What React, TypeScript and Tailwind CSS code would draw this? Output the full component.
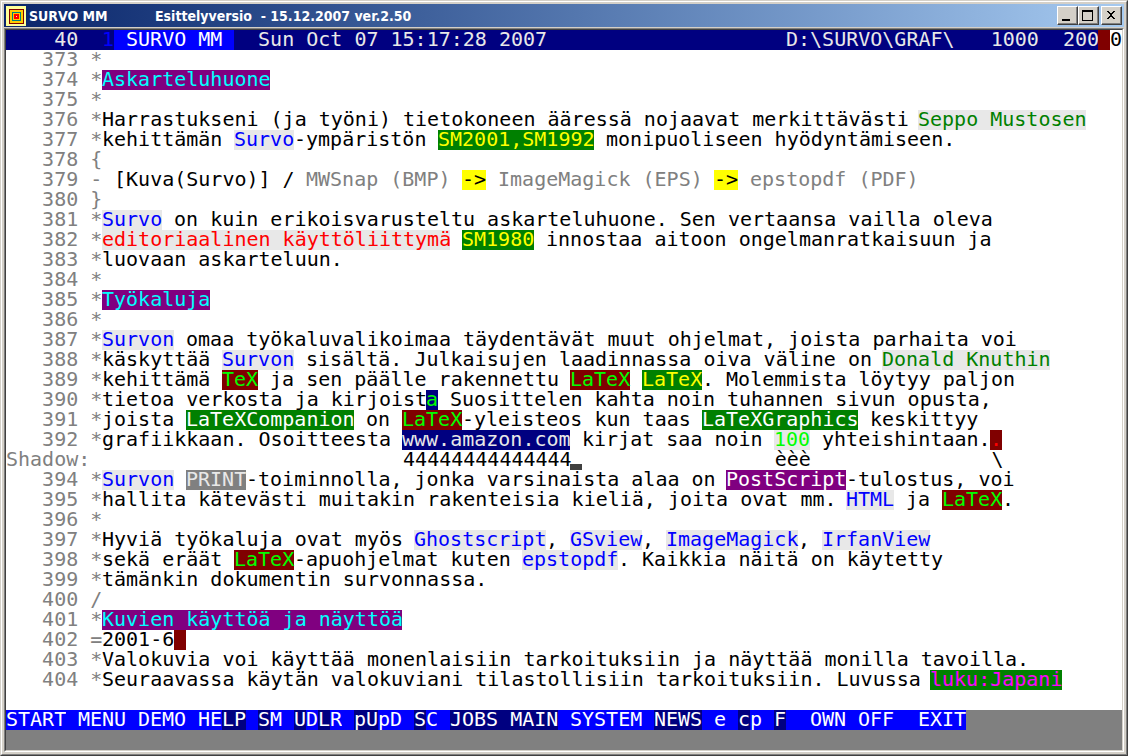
import type { ReactNode } from "react";

type Style = "g" | "head" | "blue" | "green" | "red" | "tag" | "white" | "tex" | "lime" | "mark" | "sys" | "print" | "post" | "stop" | "luku" | "cell";
type Run = string | [Style, string];
type Line = { no: string; ctl: string; runs: Run[] };

const STYLES: Record<Style, string> = {
  g: "text-[#808080]",
  head: "bg-[#800080] text-[#00ffff]",
  blue: "bg-[#e8e8e8] text-[#0000ff]",
  green: "bg-[#e8e8e8] text-[#008000]",
  red: "bg-[#e8e8e8] text-[#ff0000]",
  tag: "bg-[#008000] text-[#ffff00]",
  white: "bg-[#008000] text-white",
  tex: "bg-[#800000] text-[#00ff00]",
  lime: "bg-[#e8e8e8] text-[#00ff00]",
  mark: "bg-[#ffff00] text-black",
  sys: "bg-[#000080] text-[#e8e8e8]",
  print: "bg-[#808080] text-[#e8e8e8]",
  post: "bg-[#800080] text-white",
  stop: "bg-[#800000] text-[#ff0000]",
  luku: "bg-[#008000] text-[#ff00ff]",
  cell: "bg-[#000080] text-[#00ff00]",
};

const LINES: Line[] = [
  { no: "373", ctl: "*", runs: [] },
  { no: "374", ctl: "*", runs: [["head", "Askarteluhuone"]] },
  { no: "375", ctl: "*", runs: [] },
  { no: "376", ctl: "*", runs: ["Harrastukseni (ja työni) tietokoneen ääressä nojaavat merkittävästi ", ["green", "Seppo Mustosen"]] },
  { no: "377", ctl: "*", runs: ["kehittämän ", ["blue", "Survo"], "-ympäristön ", ["tag", "SM2001,SM1992"], " monipuoliseen hyödyntämiseen."] },
  { no: "378", ctl: "{", runs: [] },
  { no: "379", ctl: "-", runs: [" [Kuva(Survo)] / ", ["g", "MWSnap (BMP) "], ["mark", "->"], ["g", " ImageMagick (EPS) "], ["mark", "->"], ["g", " epstopdf (PDF)"]] },
  { no: "380", ctl: "}", runs: [] },
  { no: "381", ctl: "*", runs: [["blue", "Survo"], " on kuin erikoisvarusteltu askarteluhuone. Sen vertaansa vailla oleva"] },
  { no: "382", ctl: "*", runs: [["red", "editoriaalinen käyttöliittymä"], " ", ["tag", "SM1980"], " innostaa aitoon ongelmanratkaisuun ja"] },
  { no: "383", ctl: "*", runs: ["luovaan askarteluun."] },
  { no: "384", ctl: "*", runs: [] },
  { no: "385", ctl: "*", runs: [["head", "Työkaluja"]] },
  { no: "386", ctl: "*", runs: [] },
  { no: "387", ctl: "*", runs: [["blue", "Survon"], " omaa työkaluvalikoimaa täydentävät muut ohjelmat, joista parhaita voi"] },
  { no: "388", ctl: "*", runs: ["käskyttää ", ["blue", "Survon"], " sisältä. Julkaisujen laadinnassa oiva väline on ", ["green", "Donald Knuthin"]] },
  { no: "389", ctl: "*", runs: ["kehittämä ", ["tex", "TeX"], " ja sen päälle rakennettu ", ["tex", "LaTeX"], " ", ["tag", "LaTeX"], ". Molemmista löytyy paljon"] },
  { no: "390", ctl: "*", runs: ["tietoa verkosta ja kirjoist", ["cell", "a"], " Suosittelen kahta noin tuhannen sivun opusta,"] },
  { no: "391", ctl: "*", runs: ["joista ", ["white", "LaTeXCompanion"], " on ", ["tex", "LaTeX"], "-yleisteos kun taas ", ["white", "LaTeXGraphics"], " keskittyy"] },
  { no: "392", ctl: "*", runs: ["grafiikkaan. Osoitteesta ", ["sys", "www.amazon.com"], " kirjat saa noin ", ["lime", "100"], " yhteishintaan.", ["stop", "."]] },
];

const LINES_AFTER: Line[] = [
  { no: "394", ctl: "*", runs: [["blue", "Survon"], " ", ["print", "PRINT"], "-toiminnolla, jonka varsinaista alaa on ", ["post", "PostScript"], "-tulostus, voi"] },
  { no: "395", ctl: "*", runs: ["hallita kätevästi muitakin rakenteisia kieliä, joita ovat mm. ", ["blue", "HTML"], " ja ", ["tex", "LaTeX"], "."] },
  { no: "396", ctl: "*", runs: [] },
  { no: "397", ctl: "*", runs: ["Hyviä työkaluja ovat myös ", ["blue", "Ghostscript"], ", ", ["blue", "GSview"], ", ", ["blue", "ImageMagick"], ", ", ["blue", "IrfanView"]] },
  { no: "398", ctl: "*", runs: ["sekä eräät ", ["tex", "LaTeX"], "-apuohjelmat kuten ", ["blue", "epstopdf"], ". Kaikkia näitä on käytetty"] },
  { no: "399", ctl: "*", runs: ["tämänkin dokumentin survonnassa."] },
  { no: "400", ctl: "/", runs: [] },
  { no: "401", ctl: "*", runs: [["head", "Kuvien käyttöä ja näyttöä"]] },
  { no: "402", ctl: "=", runs: ["2001-6", ["stop", " "]] },
  { no: "403", ctl: "*", runs: ["Valokuvia voi käyttää monenlaisiin tarkoituksiin ja näyttää monilla tavoilla."] },
  { no: "404", ctl: "*", runs: ["Seuraavassa käytän valokuviani tilastollisiin tarkoituksiin. Luvussa ", ["luku", "luku:Japani"]] },
];

const CELL = 12;

/** A stretch of text that takes one terminal cell per character. */
function Cells({ text, className = "" }: { text: string; className?: string }) {
  return (
    <span className={className} style={{ width: text.length * CELL }}>
      {text}
    </span>
  );
}

function Row({ line }: { line: Line }) {
  return (
    <div className="flex h-5">
      <Cells className="text-[#808080]" text={"   " + line.no + " " + line.ctl} />
      {line.runs.map((run, i) =>
        typeof run === "string" ? <Cells key={i} text={run} /> : <Cells key={i} className={STYLES[run[0]]} text={run[1]} />
      )}
    </div>
  );
}

const B = "bg-[#0000ff]";
const N = "bg-[#000080]";
const MENU: [string, string][][] = [
  [[B, "START"]], [[B, "MENU"]], [[B, "DEMO"]], [[B, "HE"], [N, "LP"]], [[N, "S"], [B, "M"]],
  [[N, "U"], [B, "D"], [N, "L"], [B, "R"]], [[N, "pU"], [B, "pD"]], [[N, "S"], [B, "C"]],
  [[N, "JOBS MAIN"]], [[B, "SYSTEM"]], [[N, "NEWS"]], [[B, "e"]], [[N, "c"], [B, "p"]],
  [[N, "F"], [B, " "]], [[B, "OWN"]], [[B, "OFF"], [B, " "]], [[B, "EXIT"]],
];

function TitleButton({ label, children }: { label: string; children: ReactNode }) {
  return (
    <button aria-label={label} className="flex h-[19px] w-[21px] items-center justify-center border border-t-white border-l-white border-r-[#404040] border-b-[#404040] bg-[#d4d0c8] shadow-[inset_-1px_-1px_0_#808080]">
      <svg viewBox="0 0 19 17" className="h-[17px] w-[19px]" shapeRendering="crispEdges">{children}</svg>
    </button>
  );
}

export default function App() {
  return (
    <div className="flex min-h-screen flex-col border border-t-[#d4d0c8] border-l-[#d4d0c8] border-r-[#404040] border-b-[#404040] bg-[#d4d0c8]">
      <div className="flex grow flex-col border border-t-white border-l-white border-r-[#808080] border-b-[#808080] p-0.5">
        <header className="flex h-[23px] items-center bg-linear-to-r from-[#0a246a] to-[#a6caf0] pr-0.5 pl-0.5 font-['DejaVu_Sans_Condensed','DejaVu_Sans',sans-serif] text-[14px] font-bold text-white">
          <svg viewBox="0 0 20 20" className="h-5 w-5" shapeRendering="crispEdges">
            <rect width="20" height="20" fill="#ffff99" />
            <rect x="3" y="3" width="15" height="15" fill="#800000" />
            <rect x="4" y="4" width="13" height="13" fill="#ffcc00" />
            <rect x="6" y="6" width="9" height="9" fill="#008080" />
            <rect x="7" y="7" width="7" height="7" fill="#ffcc00" />
            <rect x="8" y="8" width="5" height="5" fill="#ff0000" />
            <rect x="10" y="10" width="1" height="1" fill="#ffff99" />
          </svg>
          <h1 className="ml-[3px] flex whitespace-pre leading-5">
            <span className="w-[126px]">SURVO MM</span>
            <span>{"Esittelyversio  - 15.12.2007 ver.2.50"}</span>
          </h1>
          <div className="ml-auto flex">
            <TitleButton label="Minimize"><rect x="4" y="12" width="8" height="2" /></TitleButton>
            <TitleButton label="Maximize"><path d="M3 3h11v11h-11zM4 5v8h9v-8z" fillRule="evenodd" /></TitleButton>
            <span className="w-0.5" />
            <TitleButton label="Close"><path d="M5 4h2v1h1v1h2v-1h1v-1h2v1h-1v1h-1v1h-1v1h-0v1h1v1h1v1h1v1h-2v-1h-1v-1h-2v1h-1v1h-2v-1h1v-1h1v-1h1v-1h-0v-1h-1v-1h-1v-1h-1z" /></TitleButton>
          </div>
        </header>
        <main className="mt-px flex grow flex-col border border-t-[#808080] border-l-[#808080] border-r-white border-b-white">
          <div className="flex grow flex-col border border-t-[#404040] border-l-[#404040] border-r-[#d4d0c8] border-b-[#d4d0c8] bg-white font-['DejaVu_Sans_Mono',monospace] text-[20px] leading-[18px] whitespace-pre text-black">
            <div className="flex h-5 bg-[#000080] text-[#e8e8e8]">
              <Cells text="    40  " />
              <Cells className="text-[#0000ff]" text="1" />
              <Cells className="bg-[#0000ff] text-white" text=" SURVO MM " />
              <Cells text="  Sun Oct 07 15:17:28 2007" />
              <span className="ml-auto flex">
                <Cells text={"D:\\SURVO\\GRAF\\   1000  200"} />
                <Cells className="bg-[#800000]" text=" " />
                <Cells className="bg-white text-black" text="0" />
              </span>
            </div>
            {LINES.map((l) => <Row key={l.no} line={l} />)}
            <div className="flex h-5">
              <Cells className="text-[#808080]" text="Shadow:" />
              <Cells text={" ".repeat(26) + "4".repeat(14)} />
              <span className="mt-3.5 h-1.5 w-3 bg-[#404040]" />
              <Cells text={" ".repeat(16) + "èèè" + " ".repeat(15) + "\\"} />
            </div>
            {LINES_AFTER.map((l) => <Row key={l.no} line={l} />)}
            <footer className="mt-5 grow bg-[#808080] pb-5 text-white">
              <nav className="flex h-5">
                {MENU.map((item, i) => (
                  <span key={i} className="flex">
                    {i > 0 && <Cells className="bg-[#0000ff]" text=" " />}
                    <button className="flex whitespace-pre">
                      {item.map(([bg, text], j) => <Cells key={j} className={"h-5 text-left " + bg} text={text} />)}
                    </button>
                  </span>
                ))}
              </nav>
            </footer>
          </div>
        </main>
      </div>
    </div>
  );
}
